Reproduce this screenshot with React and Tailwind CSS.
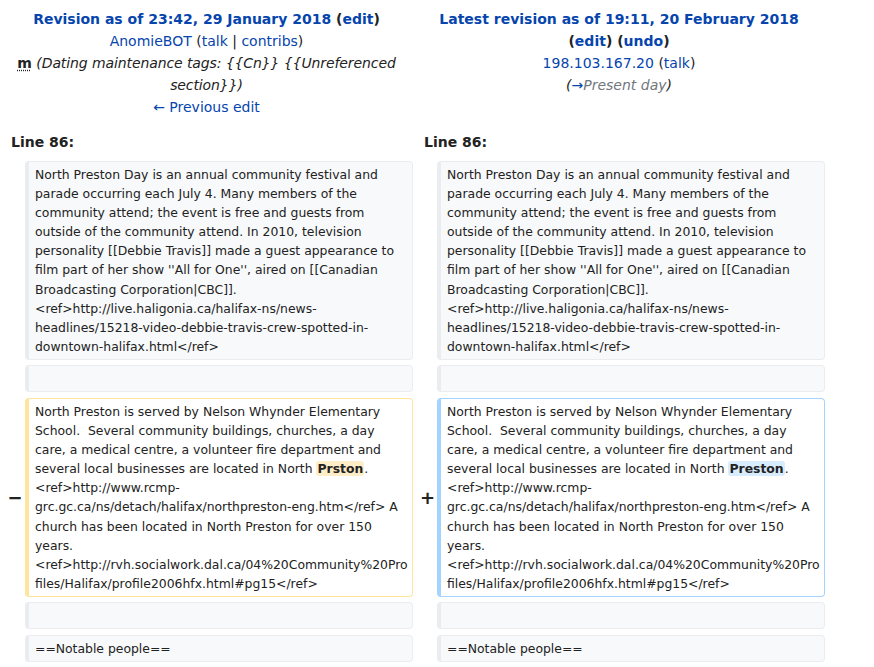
const font = { fontFamily: '"DejaVu Sans", sans-serif' };

const context1 = [
  "North Preston Day is an annual community festival and",
  "parade occurring each July 4. Many members of the",
  "community attend; the event is free and guests from",
  "outside of the community attend. In 2010, television",
  "personality [[Debbie Travis]] made a guest appearance to",
  "film part of her show ''All for One'', aired on [[Canadian",
  "Broadcasting Corporation|CBC]].",
  "<ref>http://live.haligonia.ca/halifax-ns/news-",
  "headlines/15218-video-debbie-travis-crew-spotted-in-",
  "downtown-halifax.html</ref>",
];

function changed(word, hl) {
  return [
    "North Preston is served by Nelson Whynder Elementary",
    "School.  Several community buildings, churches, a day",
    "care, a medical centre, a volunteer fire department and",
    <>
      several local businesses are located in North{" "}
      <span className={`font-bold rounded-[3px] px-[1px] ${hl}`}>{word}</span>.
    </>,
    "<ref>http://www.rcmp-",
    "grc.gc.ca/ns/detach/halifax/northpreston-eng.htm</ref> A",
    "church has been located in North Preston for over 150",
    "years.",
    "<ref>http://rvh.socialwork.dal.ca/04%20Community%20Pro",
    "files/Halifax/profile2006hfx.html#pg15</ref>",
  ];
}

function Cell({ lines = [], kind = "context" }) {
  const border =
    kind === "del"
      ? "border-[#ffe49c] bg-white"
      : kind === "add"
      ? "border-[#a3d3ff] bg-white"
      : "border-[#eaecf0] bg-[#f8f9fa]";
  return (
    <div
      className={`border border-l-4 rounded-[4px] pl-[6px] pr-2 py-[3px] text-[12.4px] leading-[19.1px] text-[#222] min-h-[27px] ${border}`}
    >
      {lines.map((l, i) => (
        <div key={i} className="whitespace-pre">
          {l}
        </div>
      ))}
    </div>
  );
}

function Marker({ sign }) {
  return (
    <div className="flex items-center justify-center pl-[5px] text-[18px] font-bold text-[#222]">
      {sign}
    </div>
  );
}

export default function App() {
  const link = "text-[#0645ad]";
  return (
    <div className="bg-white min-h-[667px] w-[874px] text-[#222]" style={font}>
      <div className="grid grid-cols-[25px_388px_24px_388px] gap-y-[5.5px] pt-[8px]">
        <div className="col-span-2 text-center text-[14px] leading-[22px] px-2">
          <div className="font-bold">
            <span className={link}>Revision as of 23:42, 29 January 2018</span> (
            <span className={link}>edit</span>)
          </div>
          <div>
            <span className={link}>AnomieBOT</span> (<span className={link}>talk</span> |{" "}
            <span className={link}>contribs</span>)
          </div>
          <div className="px-[4px]">
            <span className="font-bold underline decoration-dotted underline-offset-2">m</span>{" "}
            <span className="italic tracking-[-0.1px]">
              (Dating maintenance tags: {"{{Cn}}"} {"{{Unreferenced"}
              <br />
              {"section}})"}
            </span>
          </div>
          <div className={link}>← Previous edit</div>
        </div>
        <div className="col-span-2 text-center text-[14px] leading-[22px] px-2">
          <div className="font-bold">
            <span className={link}>Latest revision as of 19:11, 20 February 2018</span>
            <br />(<span className={link}>edit</span>) (<span className={link}>undo</span>)
          </div>
          <div>
            <span className={link}>198.103.167.20</span> (<span className={link}>talk</span>)
          </div>
          <div className="italic">
            (<span className={link}>→</span>
            <span className="text-[#72777d]">Present day</span>)
          </div>
        </div>

        <div className="col-span-2 font-bold text-[14px] leading-[20px] pl-[11px] pt-[8px] pb-[4px]">
          Line 86:
        </div>
        <div className="col-span-2 font-bold text-[14px] leading-[20px] pl-[11px] pt-[8px] pb-[4px]">
          Line 86:
        </div>

        <div />
        <Cell lines={context1} />
        <div />
        <Cell lines={context1} />

        <div />
        <Cell />
        <div />
        <Cell />

        <Marker sign="−" />
        <Cell kind="del" lines={changed("Prston", "bg-[#feeec8]")} />
        <Marker sign="+" />
        <Cell kind="add" lines={changed("Preston", "bg-[#d8ecff]")} />

        <div />
        <Cell />
        <div />
        <Cell />

        <div />
        <Cell lines={["==Notable people=="]} />
        <div />
        <Cell lines={["==Notable people=="]} />
      </div>
    </div>
  );
}
